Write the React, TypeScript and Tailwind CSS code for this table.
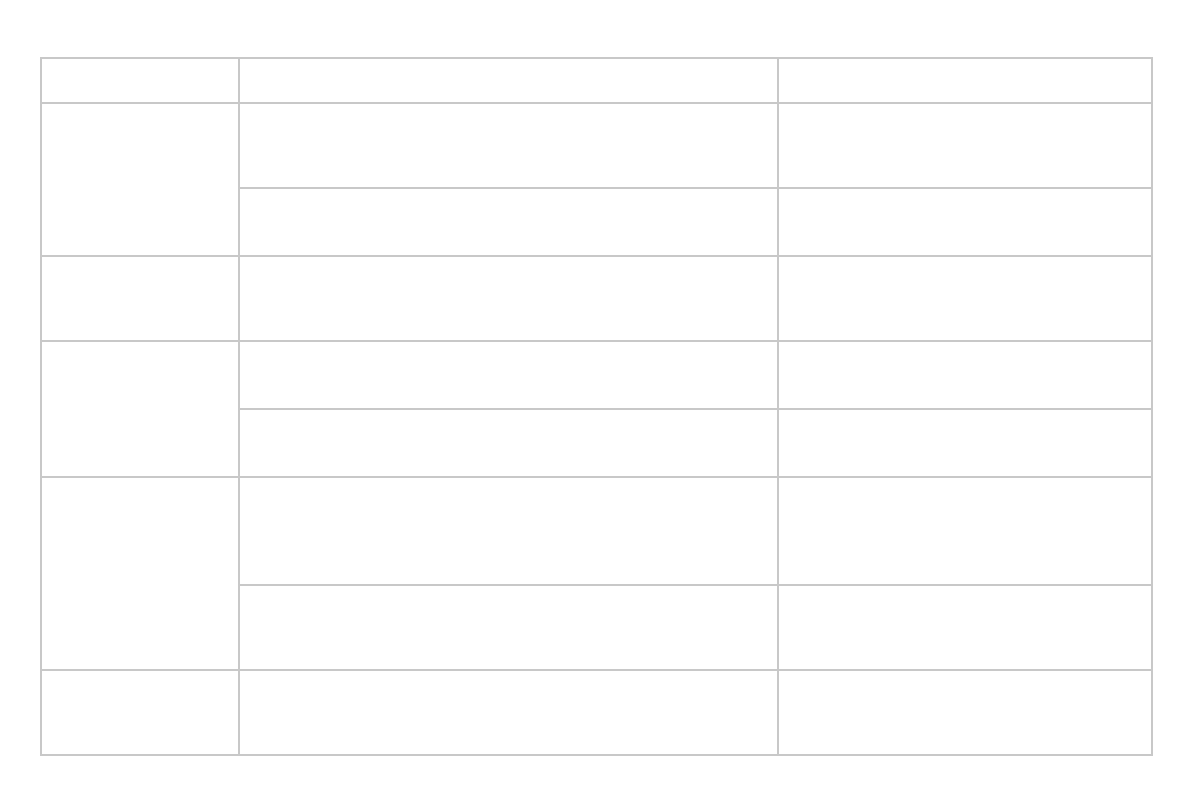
// App.tsx
const rows = [
  // [label rowspan, detail rows]
  { span: 1, header: true },
];

function Cell({ className = "" }: { className?: string }) {
  return <div className={`border-r-2 border-b-2 border-[#c8c8c8] ${className}`} />;
}

export default function App() {
  void rows;
  return (
    <div className="min-h-screen bg-white font-['Liberation_Sans',Arial,sans-serif] text-sm text-gray-800">
      <div className="ml-[40px] pt-[57px]">
        <div className="grid w-[1113px] grid-cols-[198px_539px_374px] grid-rows-[45px_85px_68px_85px_68px_68px_108px_85px_85px] border-l-2 border-t-2 border-[#c8c8c8]">
          {/* header */}
          <Cell />
          <Cell />
          <Cell />

          {/* group 1 */}
          <Cell className="row-span-2" />
          <Cell />
          <Cell />
          <Cell />
          <Cell />

          {/* group 2 */}
          <Cell />
          <Cell />
          <Cell />

          {/* group 3 */}
          <Cell className="row-span-2" />
          <Cell />
          <Cell />
          <Cell />
          <Cell />

          {/* group 4 */}
          <Cell className="row-span-2" />
          <Cell />
          <Cell />
          <Cell />
          <Cell />

          {/* group 5 */}
          <Cell />
          <Cell />
          <Cell />
        </div>
      </div>
    </div>
  );
}
